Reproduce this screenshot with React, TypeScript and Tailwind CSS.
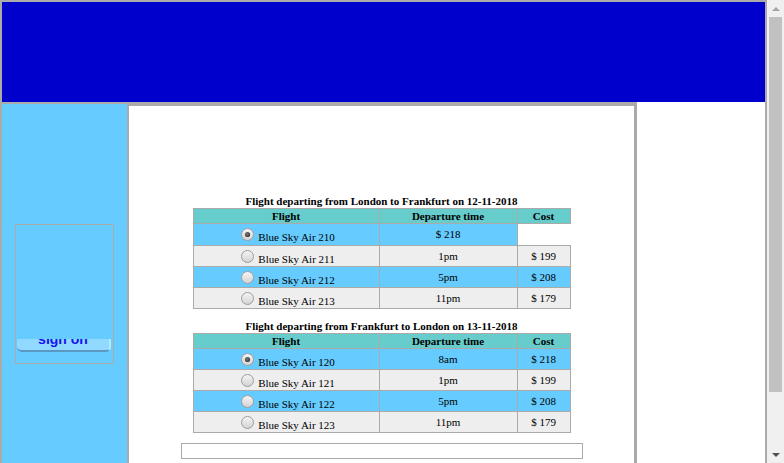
import React from "react";

type Row = { flight: string; dep: string; cost?: string; checked?: boolean; blue: boolean; h?: string };

function Radio({ checked }: { checked?: boolean }) {
  return (
    <svg width="13" height="13" viewBox="0 0 13 13" className="shrink-0">
      <defs>
        <linearGradient id="radioFill" x1="0" y1="0" x2="0" y2="1">
          <stop offset="0" stopColor="#f6f6f6" />
          <stop offset="1" stopColor="#d2d2d2" />
        </linearGradient>
        <radialGradient id="radioDot" cx="0.4" cy="0.4" r="0.7">
          <stop offset="0" stopColor="#777" />
          <stop offset="1" stopColor="#333" />
        </radialGradient>
      </defs>
      <circle cx="6.5" cy="6.5" r="6" fill="url(#radioFill)" stroke="#9c9c9c" strokeWidth="1" />
      {checked && <circle cx="6.5" cy="6.5" r="2.6" fill="url(#radioDot)" />}
    </svg>
  );
}

function FlightTable({ title, rows }: { title: string; rows: Row[] }) {
  return (
    <div className="flex flex-col items-center">
      <div className="h-[13px] text-[11px] leading-[13px] font-bold text-black">{title}</div>
      <div className="grid grid-cols-[187px_138px_53px] text-[11px] text-black">
        <div className="h-[16px] bg-[#66cccc] border border-[#aaaaaa] flex items-center justify-center font-bold">Flight</div>
        <div className="h-[16px] bg-[#66cccc] border-t border-b border-r border-[#aaaaaa] flex items-center justify-center font-bold">Departure time</div>
        <div className="h-[16px] bg-[#66cccc] border-t border-b border-r border-[#aaaaaa] flex items-center justify-center font-bold">Cost</div>
        {rows.map((r, i) => {
          const bg = r.blue ? "bg-[#66ccff]" : "bg-[#eeeeee]";
          const h = r.h === "22" ? "h-[22px]" : "h-[21px]";
          return (
            <React.Fragment key={i}>
              <div className={`${h} ${bg} border-l border-r border-b border-[#aaaaaa] flex items-center justify-center gap-[4px] pl-[4px]`}>
                <Radio checked={r.checked} />
                <span className="pt-[6px] leading-[11px]">{r.flight}</span>
              </div>
              <div className={`${h} ${bg} border-r border-b border-[#aaaaaa] flex items-center justify-center`}>
                <span className="leading-[11px]">{r.dep}</span>
              </div>
              {r.cost !== undefined ? (
                <div className={`${h} ${bg} border-r border-b border-[#aaaaaa] flex items-center justify-center`}>
                  <span className="leading-[11px]">{r.cost}</span>
                </div>
              ) : (
                <div className={`${h} bg-white border-b border-[#aaaaaa]`} />
              )}
            </React.Fragment>
          );
        })}
      </div>
    </div>
  );
}

const out: Row[] = [
  { flight: "Blue Sky Air 210", dep: "$ 218", checked: true, blue: true, h: "22" },
  { flight: "Blue Sky Air 211", dep: "1pm", cost: "$ 199", blue: false },
  { flight: "Blue Sky Air 212", dep: "5pm", cost: "$ 208", blue: true },
  { flight: "Blue Sky Air 213", dep: "11pm", cost: "$ 179", blue: false },
];

const back: Row[] = [
  { flight: "Blue Sky Air 120", dep: "8am", cost: "$ 218", checked: true, blue: true },
  { flight: "Blue Sky Air 121", dep: "1pm", cost: "$ 199", blue: false },
  { flight: "Blue Sky Air 122", dep: "5pm", cost: "$ 208", blue: true },
  { flight: "Blue Sky Air 123", dep: "11pm", cost: "$ 179", blue: false },
];

export default function App() {
  return (
    <div className="w-[784px] h-[463px] flex overflow-hidden font-['Liberation_Serif',serif]">
      <div className="w-[767px] h-full bg-[#aaaaaa] pl-[2px] pt-[2px] pr-[2px] flex flex-col">
        <div className="h-[100px] shrink-0 bg-[#0000cc]" />
        <div className="flex flex-1 min-h-0">
          <div className="w-[125px] shrink-0 mt-[2px] bg-[#66ccff] pl-[13px] pt-[120px]">
            <div className="w-[99px] h-[140px] border border-[#aaaaaa]">
              <div className="ml-[1px] mt-[114px] w-[94px] h-[13px] overflow-hidden">
                <div className="h-[13px] bg-[#92d9ff] rounded-b-[5px] border-b-2 border-r-2 border-b-[#5a98c2] border-r-[#b8e8ff] flex justify-center overflow-hidden">
                  <span className="mt-[-7px] h-[14px] leading-[14px] text-[14px] font-bold text-[#1414ee] font-['Liberation_Sans',Arial,sans-serif]">
                    sign on
                  </span>
                </div>
              </div>
            </div>
          </div>
          <div className="w-[510px] shrink-0 border-l-2 border-t-4 border-r-[3px] border-[#aaaaaa] bg-white flex flex-col items-center pt-[89px]">
            <FlightTable title="Flight departing from London to Frankfurt on 12-11-2018" rows={out} />
            <div className="h-[11px]" />
            <FlightTable title="Flight departing from Frankfurt to London on 13-11-2018" rows={back} />
            <div className="mt-[10px] w-[402px] h-[16px] shrink-0 border border-[#aaaaaa] bg-white" />
          </div>
          <div className="flex-1 bg-white" />
        </div>
      </div>
      <div className="w-[17px] h-full bg-[#f0f0f0] flex flex-col">
        <div className="h-[17px] flex items-center justify-center">
          <svg width="8" height="4" viewBox="0 0 8 4">
            <polygon points="0,4 4,0 8,4" fill="#a3a3a3" />
          </svg>
        </div>
        <div className="mx-[2px] h-[375px] bg-[#c1c1c1]" />
        <div className="flex-1" />
        <div className="h-[17px] flex items-center justify-center">
          <svg width="8" height="4" viewBox="0 0 8 4">
            <polygon points="0,0 8,0 4,4" fill="#505050" />
          </svg>
        </div>
      </div>
    </div>
  );
}
